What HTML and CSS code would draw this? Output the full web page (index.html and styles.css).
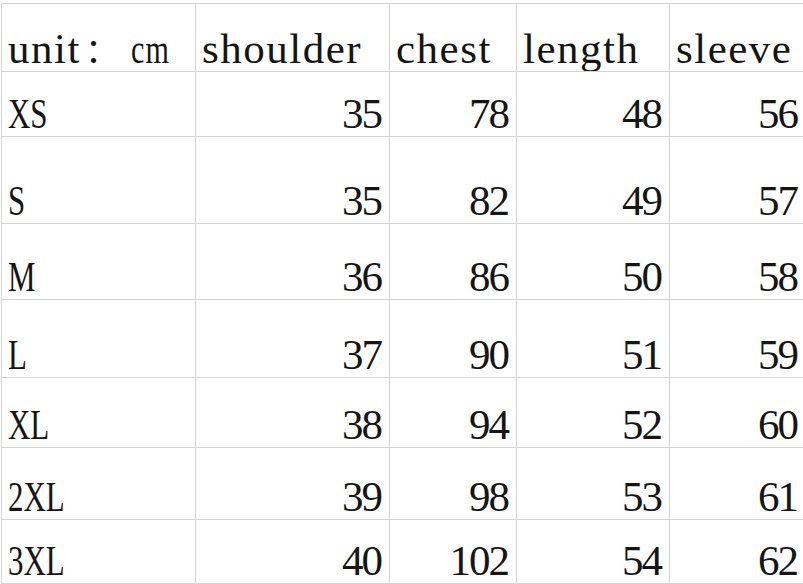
FILE: index.html
```html
<!DOCTYPE html>
<html lang="en">
<head>
<meta charset="utf-8">
<title>Size chart</title>
<link rel="stylesheet" href="styles.css">
</head>
<body>
<div class="sheet">
  <div class="cell head"><span class="txt">unit<span class="colon">：</span> <span class="unit">cm</span></span></div>
  <div class="cell head"><span class="txt">shoulder</span></div>
  <div class="cell head"><span class="txt">chest</span></div>
  <div class="cell head"><span class="txt">length</span></div>
  <div class="cell head"><span class="txt">sleeve</span></div>

  <div class="cell size"><span class="lbl">XS</span></div>
  <div class="cell num">35</div><div class="cell num">78</div><div class="cell num">48</div><div class="cell num">56</div>

  <div class="cell size"><span class="lbl">S</span></div>
  <div class="cell num">35</div><div class="cell num">82</div><div class="cell num">49</div><div class="cell num">57</div>

  <div class="cell size"><span class="lbl">M</span></div>
  <div class="cell num">36</div><div class="cell num">86</div><div class="cell num">50</div><div class="cell num">58</div>

  <div class="cell size"><span class="lbl">L</span></div>
  <div class="cell num">37</div><div class="cell num">90</div><div class="cell num">51</div><div class="cell num">59</div>

  <div class="cell size"><span class="lbl">XL</span></div>
  <div class="cell num">38</div><div class="cell num">94</div><div class="cell num">52</div><div class="cell num">60</div>

  <div class="cell size"><span class="lbl">2XL</span></div>
  <div class="cell num">39</div><div class="cell num">98</div><div class="cell num">53</div><div class="cell num">61</div>

  <div class="cell size"><span class="lbl">3XL</span></div>
  <div class="cell num">40</div><div class="cell num">102</div><div class="cell num">54</div><div class="cell num">62</div>
</div>
</body>
</html>
```

FILE: styles.css
```css
html, body {
  margin: 0;
  padding: 0;
  background: #ffffff;
  overflow: hidden;
}

.sheet {
  margin: 3px 0 0 1px;
  display: grid;
  grid-template-columns: 194px 194px 127px 153px 136px;
  grid-template-rows: 68px 65px 87px 76px 78px 70px 72px 64px;
  border-top: 1px solid #d4d4d4;
  border-left: 1px solid #d4d4d4;
  width: max-content;
  font-family: "Liberation Serif", "Times New Roman", serif;
  font-size: 43px;
  line-height: 1;
  color: #151515;
}

.cell {
  box-sizing: border-box;
  border-right: 1px solid #d4d4d4;
  border-bottom: 1px solid #d4d4d4;
  display: flex;
  align-items: flex-end;
  padding: 0 6px 1px 6px;
  white-space: nowrap;
  overflow: hidden;
}

.head .txt {
  letter-spacing: 1.5px;
}

.colon {
  font-family: "Noto Sans CJK SC", sans-serif;
  font-size: 34px;
  letter-spacing: 0;
  margin-left: 4px;
}

.unit {
  display: inline-block;
  transform: scaleX(0.7);
  transform-origin: left bottom;
}

.size .lbl {
  display: inline-block;
  transform: scaleX(0.72);
  transform-origin: left bottom;
}

.num {
  justify-content: flex-end;
  letter-spacing: -2px;
  padding-right: 8px;
}
```
